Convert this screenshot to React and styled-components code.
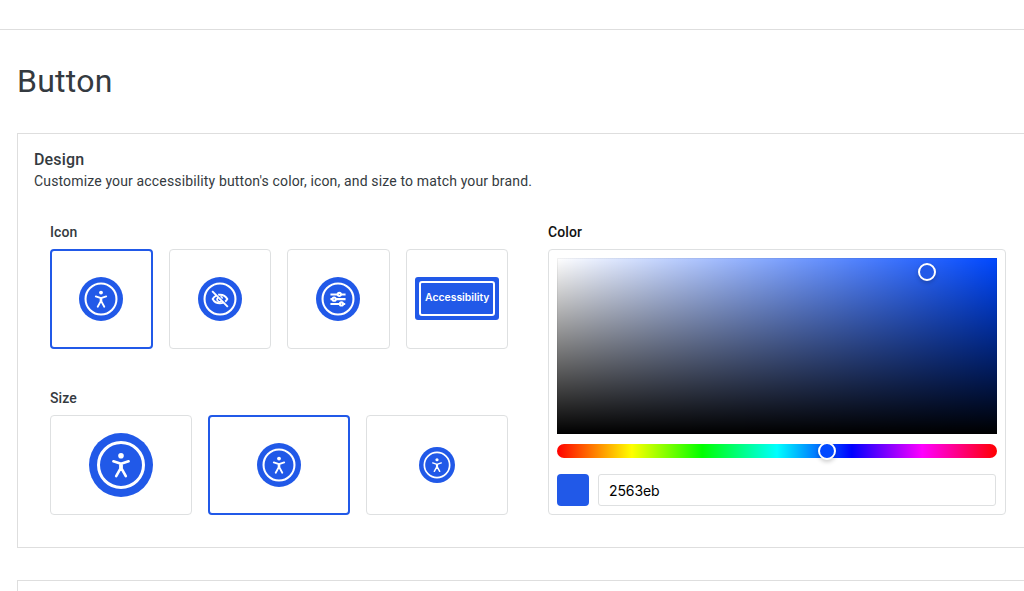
import React from "react";
import styled, { createGlobalStyle } from "styled-components";

const Global = createGlobalStyle`
  *, *::before, *::after { box-sizing: border-box; }
  html, body { margin: 0; background: #fff; }
  body { font-family: Roboto, sans-serif; color: #343a40; }
`;

const BLUE = "#2159e8";
const LINE = "#dee0e1";

const Shell = styled.div`
  height: 100vh;
  overflow: hidden;
  display: flex;
  flex-direction: column;
`;

const TopBar = styled.header`
  flex: none;
  height: 30px;
  border-bottom: 1px solid #dedede;
`;

const Page = styled.main`
  flex: 1;
  min-height: 0;
  display: flex;
  flex-direction: column;
  padding: 31px 0 0 17px;
  width: 1056px;
`;

const Title = styled.h1`
  margin: 0 0 32px;
  font-size: 32px;
  line-height: 40px;
  font-weight: 400;
  letter-spacing: 0.25px;
`;

const Panel = styled.section`
  flex: none;
  height: 415px;
  border: 1px solid #dedede;
  padding: 16px;
  margin-bottom: 32px;
`;

const NextPanel = styled.section`
  flex: 1;
  min-height: 0;
  border: 1px solid #dedede;
  border-bottom: 0;
`;

const PanelTitle = styled.h2`
  margin: 0;
  font-size: 16px;
  line-height: 20px;
  font-weight: 500;
  letter-spacing: 0.15px;
`;

const Description = styled.p`
  margin: 0;
  font-size: 14px;
  line-height: 23px;
  letter-spacing: 0.15px;
`;

const Settings = styled.div`
  display: grid;
  grid-template-columns: 458px 458px;
  column-gap: 40px;
  padding: 29px 16px 0;
`;

const Options = styled.div`
  display: flex;
  flex-direction: column;
  gap: 39px;
`;

const Label = styled.h3`
  margin: 0 0 7px;
  font-size: 14px;
  line-height: 20px;
  font-weight: 500;
  letter-spacing: 0.1px;
  color: ${(p) => (p.$dark ? "#111" : "#343a40")};
`;

const Choices = styled.div`
  display: grid;
  grid-template-columns: repeat(${(p) => p.$count}, 1fr);
  gap: 16px;
`;

const Choice = styled.button`
  display: flex;
  align-items: center;
  justify-content: center;
  height: 100px;
  min-width: 0;
  padding: 0;
  background: #fff;
  border-radius: 4px;
  border: ${(p) => (p.$selected ? `2px solid ${BLUE}` : `1px solid ${LINE}`)};
`;

const Glyph = styled.svg`
  display: block;
  width: ${(p) => p.$size}px;
  height: ${(p) => p.$size}px;
`;

const TextBadge = styled.span`
  display: flex;
  width: 84px;
  height: 43px;
  margin-bottom: 1px;
  padding: 4px;
  background: ${BLUE};
  border-radius: 3px;
  flex: none;
`;

const TextBadgeInner = styled.span`
  flex: 1;
  display: flex;
  justify-content: center;
  padding-left: 1px;
  border: 2px solid #fff;
  border-radius: 3px;
  color: #fff;
  font: 600 10.4px/30px Inter, sans-serif;
`;

const Picker = styled.div`
  height: 266px;
  padding: 8px;
  border: 1px solid ${LINE};
  border-radius: 4px;
`;

const Saturation = styled.div`
  position: relative;
  height: 176px;
  background: linear-gradient(to top, #000, transparent),
    linear-gradient(to right, #fff, transparent), #0048ff;
  box-shadow: inset 0 0 0 1px rgba(0, 0, 0, 0.05);
`;

const Hue = styled.div`
  position: relative;
  height: 14px;
  margin: 10px 0 16px;
  border-radius: 7px;
  background: linear-gradient(to right, #f00 0%, #ff0 17%, #0f0 33%, #0ff 50%, #00f 67%, #f0f 83%, #f00 100%);
`;

const Handle = styled.span`
  position: absolute;
  left: ${(p) => p.$x}px;
  top: ${(p) => p.$y}px;
  width: 18px;
  height: 18px;
  border-radius: 50%;
  border: 2px solid #fff;
  background: ${(p) => p.$color};
  box-shadow: 0 2px 4px rgba(0, 0, 0, 0.2);
`;

const HexRow = styled.div`
  display: flex;
  gap: 9px;
  padding-right: 1px;
`;

const Swatch = styled.span`
  width: 32px;
  height: 32px;
  border-radius: 4px;
  background: ${BLUE};
`;

const HexInput = styled.input`
  flex: 1;
  min-width: 0;
  height: 32px;
  padding: 1px 10px 0;
  border: 1px solid ${LINE};
  border-radius: 3px;
  outline: none;
  color: #000;
  background: #fff;
  font: 400 14px/20px Inter, sans-serif;
  letter-spacing: -0.1px;
`;

function Badge({ size, ring = 3, children }) {
  return (
    <Glyph $size={size} viewBox="-32 -32 64 64" fill="none">
      <circle r="32" fill={BLUE} />
      <circle r={24 - ring / 2} stroke="#fff" strokeWidth={ring} />
      {children}
    </Glyph>
  );
}

const Person = () => (
  <g stroke="#fff" strokeWidth="2.6" strokeLinecap="round" strokeLinejoin="round">
    <circle cy="-9.3" r="2.8" fill="#fff" stroke="none" />
    <path d="M-7.6-3.7 0-1.2 7.6-3.7M-.6-.6V3.6L-4.8 11.2M.6-.6V3.6L4.8 11.2" />
  </g>
);

const EyeOff = () => (
  <g stroke="#fff" strokeWidth="2.8">
    <path d="M-5.4-5C-7.8-3.9-9.6-2.2-10.6 0-8.6 3.9-4.6 6.3 0 6.3 1.8 6.3 3.4 6 4.9 5.4" />
    <path d="M-2.6-6.1C-1.8-6.3-.9-6.3 0-6.3 4.6-6.3 8.6-3.9 10.6 0 9.9 1.5 8.8 2.8 7.5 3.8" />
    <path strokeWidth="2.3" d="M-3-2.2A3.6 3.6 0 0 0 2.2 3M.6-3.6A3.6 3.6 0 0 1 3.6-.6" />
    <path d="M-11.4-11.4 11.4 11.4" />
  </g>
);

const Sliders = () => (
  <g stroke="#fff" strokeWidth="3">
    <path d="M-11-6.6H-.5M4.3-6.6H11M-11 .2H-8M-3.2 .2H11M-11 7.2H2.5M7.5 7.2H10.5" />
    <circle cx="1.9" cy="-6.6" r="2.3" />
    <circle cx="-5.6" cy=".2" r="2.3" />
    <circle cx="5" cy="7.2" r="2.3" />
  </g>
);

export default function App() {
  return (
    <Shell>
      <Global />
      <TopBar />
      <Page>
        <Title>Button</Title>
        <Panel>
          <PanelTitle>Design</PanelTitle>
          <Description>Customize your accessibility button's color, icon, and size to match your brand.</Description>
          <Settings>
            <Options>
              <div>
                <Label>Icon</Label>
                <Choices $count={4}>
                  <Choice $selected><Badge size={44}><Person /></Badge></Choice>
                  <Choice><Badge size={44}><EyeOff /></Badge></Choice>
                  <Choice><Badge size={44}><Sliders /></Badge></Choice>
                  <Choice>
                    <TextBadge><TextBadgeInner>Accessibility</TextBadgeInner></TextBadge>
                  </Choice>
                </Choices>
              </div>
              <div>
                <Label>Size</Label>
                <Choices $count={3}>
                  <Choice><Badge size={64}><Person /></Badge></Choice>
                  <Choice $selected><Badge size={44}><Person /></Badge></Choice>
                  <Choice><Badge size={36}><Person /></Badge></Choice>
                </Choices>
              </div>
            </Options>
            <div>
              <Label $dark>Color</Label>
              <Picker>
                <Saturation><Handle $x={361} $y={5} $color={BLUE} /></Saturation>
                <Hue><Handle $x={261} $y={-2} $color="#0048ff" /></Hue>
                <HexRow>
                  <Swatch />
                  <HexInput defaultValue="2563eb" aria-label="Hex color" />
                </HexRow>
              </Picker>
            </div>
          </Settings>
        </Panel>
        <NextPanel />
      </Page>
    </Shell>
  );
}
